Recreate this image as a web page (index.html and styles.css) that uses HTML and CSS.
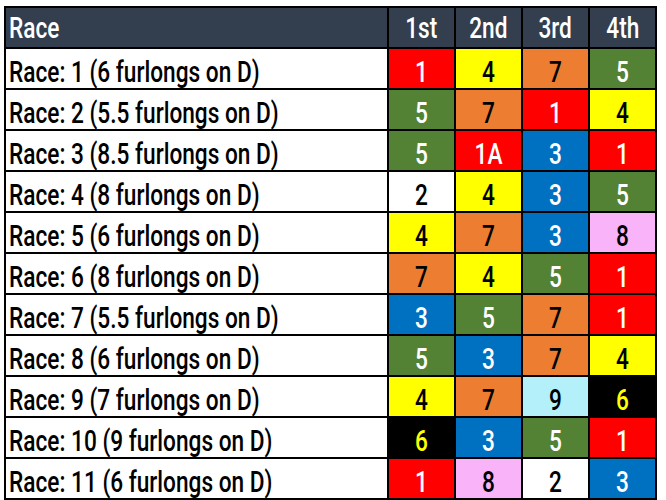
FILE: index.html
```html
<!DOCTYPE html>
<html>
<head>
<meta charset="utf-8">
<link rel="stylesheet" href="styles.css">
</head>
<body>
<div class="grid">
  <div class="hd lbl"><span class="t">Race</span></div>
  <div class="hd"><span class="t">1st</span></div>
  <div class="hd"><span class="t">2nd</span></div>
  <div class="hd"><span class="t">3rd</span></div>
  <div class="hd"><span class="t">4th</span></div>

  <div class="lbl"><span class="t">Race: 1 (6 furlongs on D)</span></div>
  <div class="n c1"><span class="t">1</span></div><div class="n c4"><span class="t">4</span></div><div class="n c7"><span class="t">7</span></div><div class="n c5"><span class="t">5</span></div>

  <div class="lbl"><span class="t">Race: 2 (5.5 furlongs on D)</span></div>
  <div class="n c5"><span class="t">5</span></div><div class="n c7"><span class="t">7</span></div><div class="n c1"><span class="t">1</span></div><div class="n c4"><span class="t">4</span></div>

  <div class="lbl"><span class="t">Race: 3 (8.5 furlongs on D)</span></div>
  <div class="n c5"><span class="t">5</span></div><div class="n c1"><span class="t">1A</span></div><div class="n c3"><span class="t">3</span></div><div class="n c1"><span class="t">1</span></div>

  <div class="lbl"><span class="t">Race: 4 (8 furlongs on D)</span></div>
  <div class="n c2"><span class="t">2</span></div><div class="n c4"><span class="t">4</span></div><div class="n c3"><span class="t">3</span></div><div class="n c5"><span class="t">5</span></div>

  <div class="lbl"><span class="t">Race: 5 (6 furlongs on D)</span></div>
  <div class="n c4"><span class="t">4</span></div><div class="n c7"><span class="t">7</span></div><div class="n c3"><span class="t">3</span></div><div class="n c8"><span class="t">8</span></div>

  <div class="lbl"><span class="t">Race: 6 (8 furlongs on D)</span></div>
  <div class="n c7"><span class="t">7</span></div><div class="n c4"><span class="t">4</span></div><div class="n c5"><span class="t">5</span></div><div class="n c1"><span class="t">1</span></div>

  <div class="lbl"><span class="t">Race: 7 (5.5 furlongs on D)</span></div>
  <div class="n c3"><span class="t">3</span></div><div class="n c5"><span class="t">5</span></div><div class="n c7"><span class="t">7</span></div><div class="n c1"><span class="t">1</span></div>

  <div class="lbl"><span class="t">Race: 8 (6 furlongs on D)</span></div>
  <div class="n c5"><span class="t">5</span></div><div class="n c3"><span class="t">3</span></div><div class="n c7"><span class="t">7</span></div><div class="n c4"><span class="t">4</span></div>

  <div class="lbl"><span class="t">Race: 9 (7 furlongs on D)</span></div>
  <div class="n c4"><span class="t">4</span></div><div class="n c7"><span class="t">7</span></div><div class="n c9"><span class="t">9</span></div><div class="n c6"><span class="t">6</span></div>

  <div class="lbl"><span class="t">Race: 10 (9 furlongs on D)</span></div>
  <div class="n c6"><span class="t">6</span></div><div class="n c3"><span class="t">3</span></div><div class="n c5"><span class="t">5</span></div><div class="n c1"><span class="t">1</span></div>

  <div class="lbl"><span class="t">Race: 11 (6 furlongs on D)</span></div>
  <div class="n c1"><span class="t">1</span></div><div class="n c8"><span class="t">8</span></div><div class="n c2"><span class="t">2</span></div><div class="n c3"><span class="t">3</span></div>
</div>
</body>
</html>
```
FILE: styles.css
```css
html, body {
  margin: 0;
  padding: 0;
  background: #ffffff;
}
body {
  padding: 6px 0 0 4px;
  font-family: Roboto, "Liberation Sans", sans-serif;
  font-weight: 500;
  font-size: 30px;
}
.grid {
  display: grid;
  grid-template-columns: 381px repeat(4, 65px);
  grid-auto-rows: 39px;
  gap: 2px;
  padding: 2px;
  background: #000000;
  width: max-content;
}
.grid > div {
  background: #ffffff;
  color: #000000;
  line-height: 33px;
  padding-top: 6px;
  box-sizing: border-box;
  text-align: center;
  overflow: hidden;
  white-space: nowrap;
}
.grid > .hd {
  background: #333f4f;
  color: #ffffff;
  padding-top: 3px;
}
.grid > .lbl {
  text-align: left;
  padding-left: 3px;
}
.t {
  display: inline-block;
  transform: scaleX(0.755);
}
.lbl .t {
  transform-origin: left center;
}
.grid > .c1 { background: #ff0000; color: #ffffff; }
.grid > .c2 { background: #ffffff; color: #000000; }
.grid > .c3 { background: #0070c0; color: #ffffff; }
.grid > .c4 { background: #ffff00; color: #000000; }
.grid > .c5 { background: #548235; color: #ffffff; }
.grid > .c6 { background: #000000; color: #ffff00; }
.grid > .c7 { background: #ed7d31; color: #000000; }
.grid > .c8 { background: #f9b3f9; color: #000000; }
.grid > .c9 { background: #b3f0fa; color: #000000; }
```
